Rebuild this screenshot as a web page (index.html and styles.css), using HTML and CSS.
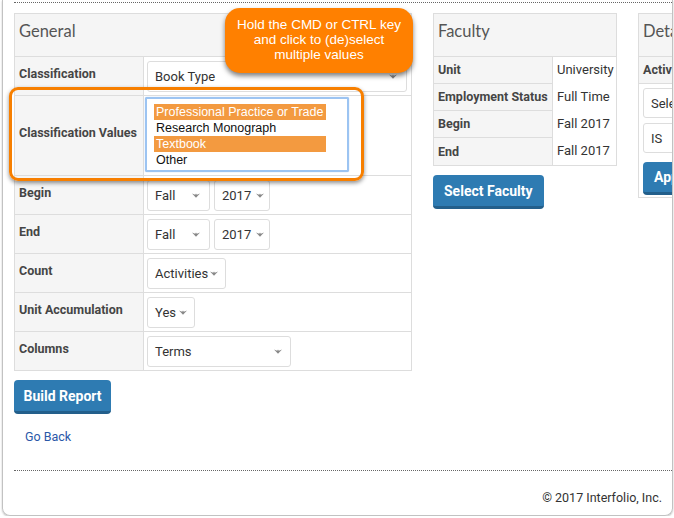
FILE: index.html
```html
<!DOCTYPE html>
<html lang="en">
  <head>
    <meta charset="UTF-8" />
    <meta name="viewport" content="width=device-width, initial-scale=1.0" />
    <title>Report Builder</title>
    <link rel="stylesheet" href="styles.css">
  </head>
  <body>
    <div class="frame">
      <div class="topline"></div>
      <main class="content">
        <div class="panels">
          <section class="panel general">
            <h2 class="panel-title">General</h2>
            <div class="rows">
              <div class="label">Classification</div>
              <div class="value">
                <div class="sel sel-book"><span>Book Type</span><svg class="arrow" width="8" height="5" viewBox="0 0 8 5"><path d="M0 0.5 L4 4.8 L8 0.5 L4.8 1.8 L4 0.5 L3.2 1.8 Z"/></svg></div>
              </div>
              <div class="label">Classification Values</div>
              <div class="value">
                <div class="multi">
                  <p class="opt on">Professional Practice or Trade</p>
                  <p class="opt">Research Monograph</p>
                  <p class="opt on">Textbook</p>
                  <p class="opt">Other</p>
                </div>
              </div>
              <div class="label">Begin</div>
              <div class="value pair">
                <div class="sel sel-term"><span>Fall</span><svg class="arrow" width="8" height="5" viewBox="0 0 8 5"><path d="M0 0.5 L4 4.8 L8 0.5 L4.8 1.8 L4 0.5 L3.2 1.8 Z"/></svg></div>
                <div class="sel sel-year"><span>2017</span><svg class="arrow" width="8" height="5" viewBox="0 0 8 5"><path d="M0 0.5 L4 4.8 L8 0.5 L4.8 1.8 L4 0.5 L3.2 1.8 Z"/></svg></div>
              </div>
              <div class="label">End</div>
              <div class="value pair">
                <div class="sel sel-term"><span>Fall</span><svg class="arrow" width="8" height="5" viewBox="0 0 8 5"><path d="M0 0.5 L4 4.8 L8 0.5 L4.8 1.8 L4 0.5 L3.2 1.8 Z"/></svg></div>
                <div class="sel sel-year"><span>2017</span><svg class="arrow" width="8" height="5" viewBox="0 0 8 5"><path d="M0 0.5 L4 4.8 L8 0.5 L4.8 1.8 L4 0.5 L3.2 1.8 Z"/></svg></div>
              </div>
              <div class="label">Count</div>
              <div class="value">
                <div class="sel sel-count"><span>Activities</span><svg class="arrow" width="8" height="5" viewBox="0 0 8 5"><path d="M0 0.5 L4 4.8 L8 0.5 L4.8 1.8 L4 0.5 L3.2 1.8 Z"/></svg></div>
              </div>
              <div class="label">Unit Accumulation</div>
              <div class="value">
                <div class="sel sel-yes"><span>Yes</span><svg class="arrow" width="8" height="5" viewBox="0 0 8 5"><path d="M0 0.5 L4 4.8 L8 0.5 L4.8 1.8 L4 0.5 L3.2 1.8 Z"/></svg></div>
              </div>
              <div class="label last">Columns</div>
              <div class="value last">
                <div class="sel sel-terms"><span>Terms</span><svg class="arrow" width="8" height="5" viewBox="0 0 8 5"><path d="M0 0.5 L4 4.8 L8 0.5 L4.8 1.8 L4 0.5 L3.2 1.8 Z"/></svg></div>
              </div>
            </div>
          </section>

          <div class="column">
            <section class="panel faculty">
              <h2 class="panel-title">Faculty</h2>
              <div class="facts">
                <div class="label">Unit</div>
                <div class="fact">University</div>
                <div class="label">Employment Status</div>
                <div class="fact">Full Time</div>
                <div class="label">Begin</div>
                <div class="fact">Fall 2017</div>
                <div class="label last">End</div>
                <div class="fact">Fall 2017</div>
              </div>
            </section>
            <button class="btn">Select Faculty</button>
          </div>

          <section class="panel details">
            <h2 class="panel-title">Details</h2>
            <div class="label full">Activity Type</div>
            <div class="detail-body">
              <div class="sel sel-full"><span>Select a field</span></div>
              <div class="sel sel-full"><span>IS</span></div>
              <button class="btn">Apply</button>
            </div>
          </section>
        </div>

        <button class="btn build">Build Report</button>
        <a class="back" href="#">Go Back</a>
      </main>
      <footer class="footer">© 2017 Interfolio, Inc.</footer>

      <div class="highlight"></div>
      <div class="tip">Hold the CMD or CTRL key<br>and click to (de)select<br>multiple values</div>
    </div>
  </body>
</html>
```

FILE: styles.css
```css
* {
  margin: 0;
  padding: 0;
  box-sizing: border-box;
}

body {
  font-family: Roboto, "Liberation Sans", Arial, sans-serif;
  color: #333;
  background-color: #fff;
}

/* FRAME */
.frame {
  position: relative;
  height: 516px;
  margin: 0 1px 0 2px;
  border: 1px solid #c2c2c2;
  border-top: none;
  border-radius: 0 0 8px 8px;
  box-shadow: 0 1px 2px rgba(0, 0, 0, 0.25);
  overflow: hidden;
}

.topline {
  height: 3px;
  margin-left: 11px;
  border-bottom: 1px dotted #666;
}

.content {
  padding: 10px 0 0 11px;
}

.panels {
  display: flex;
  align-items: flex-start;
  gap: 21px;
  width: 900px;
}

/* PANELS */
.panel {
  border: 1px solid #ddd;
  background: #fff;
}

.panel-title {
  height: 43px;
  padding: 0 0 8px 4px;
  display: flex;
  align-items: center;
  font-family: Lato, "Open Sans", sans-serif;
  font-weight: 400;
  font-size: 16.5px;
  color: #555;
  background: #f5f5f5;
  border-bottom: 1px solid #ddd;
}

.label {
  display: flex;
  align-items: center;
  padding: 0 3px 6px 4px;
  font-size: 12.5px;
  font-weight: 700;
  color: #454545;
  background: #f5f5f5;
  border-right: 1px solid #ddd;
  border-bottom: 1px solid #ddd;
  white-space: nowrap;
}

.label.last {
  border-bottom: none;
}

.general {
  width: 398px;
}

.rows {
  display: grid;
  grid-template-columns: 129px 1fr;
}

.value {
  padding: 4px 4px 3px 3px;
  border-bottom: 1px solid #ddd;
}

.value.last {
  border-bottom: none;
}

.pair {
  display: flex;
  gap: 4px;
}

/* SELECTS */
.sel {
  height: 31px;
  display: flex;
  align-items: center;
  justify-content: space-between;
  padding: 0 7px 0 7px;
  font-size: 13px;
  color: #333;
  background: #fff;
  border: 1px solid #ddd;
  border-radius: 3px;
  white-space: nowrap;
}

.arrow {
  fill: #888;
  flex: none;
}

.sel-book { width: 100%; padding-right: 9px; }
.sel-term { width: 63px; padding-right: 9px; }
.sel-year { width: 56px; padding-right: 5px; }
.sel-count { width: 79px; padding-right: 7px; }
.sel-yes { width: 48px; padding-right: 7px; }
.sel-terms { width: 144px; padding-right: 8px; }
.sel-full { width: 200px; height: 30px; overflow: hidden; }

.value:nth-child(4) {
  padding: 1px 4px 3px 1px;
}

.multi {
  height: 75px;
  width: 204px;
  padding: 5px 0 0 7px;
  border: 2px solid #9cc4f2;
  border-radius: 2px;
  background: #fff;
  box-shadow: 0 0 1px #7fb0ea;
}

.opt {
  width: 172px;
  height: 16px;
  line-height: 16px;
  padding-left: 2px;
  font-family: "Liberation Sans", Arial, sans-serif;
  font-size: 12.5px;
  color: #111;
  white-space: nowrap;
}

.opt.on {
  background: #f39a40;
  color: #fff;
}

/* FACULTY */
.column {
  display: flex;
  flex-direction: column;
  align-items: flex-start;
  gap: 9px;
}

.faculty {
  width: 184px;
}

.facts {
  display: grid;
  grid-template-columns: 119px 1fr;
  grid-auto-rows: 27px;
}

.facts .label {
  padding-bottom: 1px;
}

.fact {
  padding: 5px 0 0 4px;
  font-size: 13px;
  color: #333;
  white-space: nowrap;
}

/* DETAILS */
.details {
  width: 200px;
}

.label.full {
  height: 27px;
  border-right: none;
  padding-bottom: 1px;
}

.detail-body {
  display: flex;
  flex-direction: column;
  gap: 5px;
  padding: 4px 0 2px 4px;
}

.detail-body .btn {
  margin-top: 4px;
  height: 33px;
  width: 80px;
  text-align: left;
}

/* BUTTONS & LINKS */
.btn {
  height: 34px;
  padding: 0 11px;
  border: none;
  border-bottom: 3px solid #235f8b;
  border-radius: 4px;
  background-color: #2e7bb2;
  color: #fff;
  font-family: Roboto, "Liberation Sans", sans-serif;
  font-size: 14px;
  font-weight: 700;
  cursor: pointer;
}

.btn.build {
  display: block;
  margin-top: 9px;
  width: 97px;
  padding: 0;
}

.back {
  display: block;
  width: fit-content;
  margin: 15px 0 0 11px;
  line-height: 16px;
  font-size: 12.5px;
  color: #2a58a8;
  text-decoration: none;
}

.footer {
  margin: 25px 0 0 11px;
  padding: 19px 10px 0 0;
  border-top: 1px dotted #666;
  text-align: right;
  font-size: 12.5px;
  color: #333;
}

/* OVERLAYS */
.highlight {
  position: absolute;
  left: 6px;
  top: 87px;
  width: 355px;
  height: 94px;
  border: 3px solid #f77f00;
  border-radius: 9px;
  box-shadow: 0 2px 4px rgba(0, 0, 0, 0.45);
}

.tip {
  position: absolute;
  left: 222px;
  top: 8px;
  width: 188px;
  height: 65px;
  padding-top: 9px;
  border-radius: 15px;
  background: #ff8000;
  color: #fff;
  font-family: "Liberation Sans", Arial, sans-serif;
  font-size: 13.5px;
  line-height: 15px;
  text-align: center;
  box-shadow: 0 3px 5px rgba(0, 0, 0, 0.5);
}
```
